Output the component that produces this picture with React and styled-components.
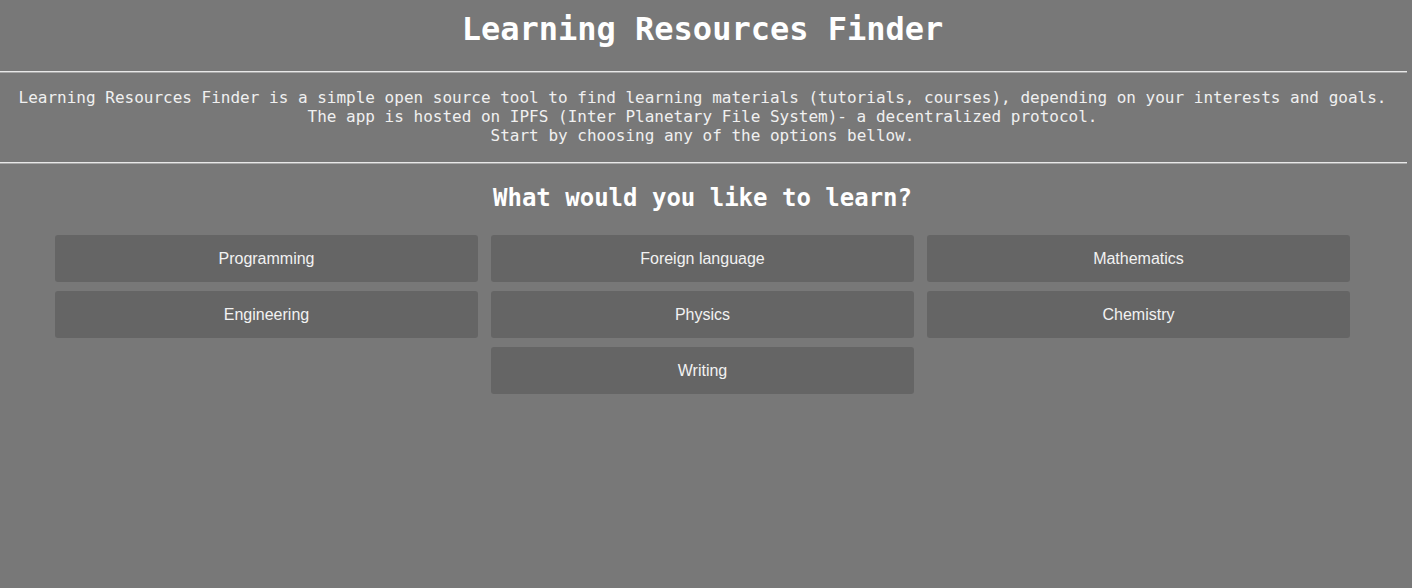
import React from "react";
import styled, { createGlobalStyle } from "styled-components";

const topics = [
  "Programming",
  "Foreign language",
  "Mathematics",
  "Engineering",
  "Physics",
  "Chemistry",
  "Writing",
];

const App = () => {
  return (
    <>
      <GlobalStyle />
      <Page>
        <Header>
          <Title>Learning Resources Finder</Title>
        </Header>
        <Divider />
        <Intro>
          Learning Resources Finder is a simple open source tool to find learning
          materials (tutorials, courses), depending on your interests and goals.
          <br />
          The app is hosted on IPFS (Inter Planetary File System)- a decentralized
          protocol.
          <br />
          Start by choosing any of the options bellow.
        </Intro>
        <Divider />
        <Question>What would you like to learn?</Question>
        <Options>
          {topics.map(t => (
            <Option key={t} type="button">
              {t}
            </Option>
          ))}
        </Options>
      </Page>
    </>
  );
};

export default App;

const GlobalStyle = createGlobalStyle`
  html, body {
    margin: 0;
    padding: 0;
    background: #787878;
    min-height: 100%;
  }
  body {
    font-family: "DejaVu Sans Mono", monospace;
    color: #f2f2f2;
  }
`;

const Page = styled.div`
  width: 1405px;
  min-height: 588px;
`;

const Header = styled.header`
  padding: 11px 0 23px;
  text-align: center;
`;

const Title = styled.h1`
  margin: 0;
  font-size: 32px;
  line-height: 37px;
  font-weight: bold;
  color: #ffffff;
`;

const Divider = styled.hr`
  width: 1407px;
  margin: 0;
  height: 0;
  border: none;
  border-top: 1px solid #e8e8e8;
  border-bottom: 1px solid #a8a8a8;
`;

const Intro = styled.p`
  margin: 0;
  padding: 15px 0 17px;
  text-align: center;
  font-size: 16px;
  line-height: 19px;
  color: #f0f0f0;
`;

const Question = styled.h2`
  margin: 20px 0 23px;
  text-align: center;
  font-size: 24px;
  line-height: 28px;
  font-weight: bold;
  color: #ffffff;
`;

const Options = styled.div`
  width: 1295px;
  margin: 0 auto;
  display: flex;
  flex-wrap: wrap;
  justify-content: center;
  column-gap: 13px;
  row-gap: 9px;
`;

const Option = styled.button`
  width: 423px;
  height: 47px;
  border: none;
  border-radius: 3px;
  background: #656565;
  color: #f2f2f2;
  font-family: "Liberation Sans", Arial, sans-serif;
  font-size: 16px;
  cursor: pointer;
  padding: 0;
`;
